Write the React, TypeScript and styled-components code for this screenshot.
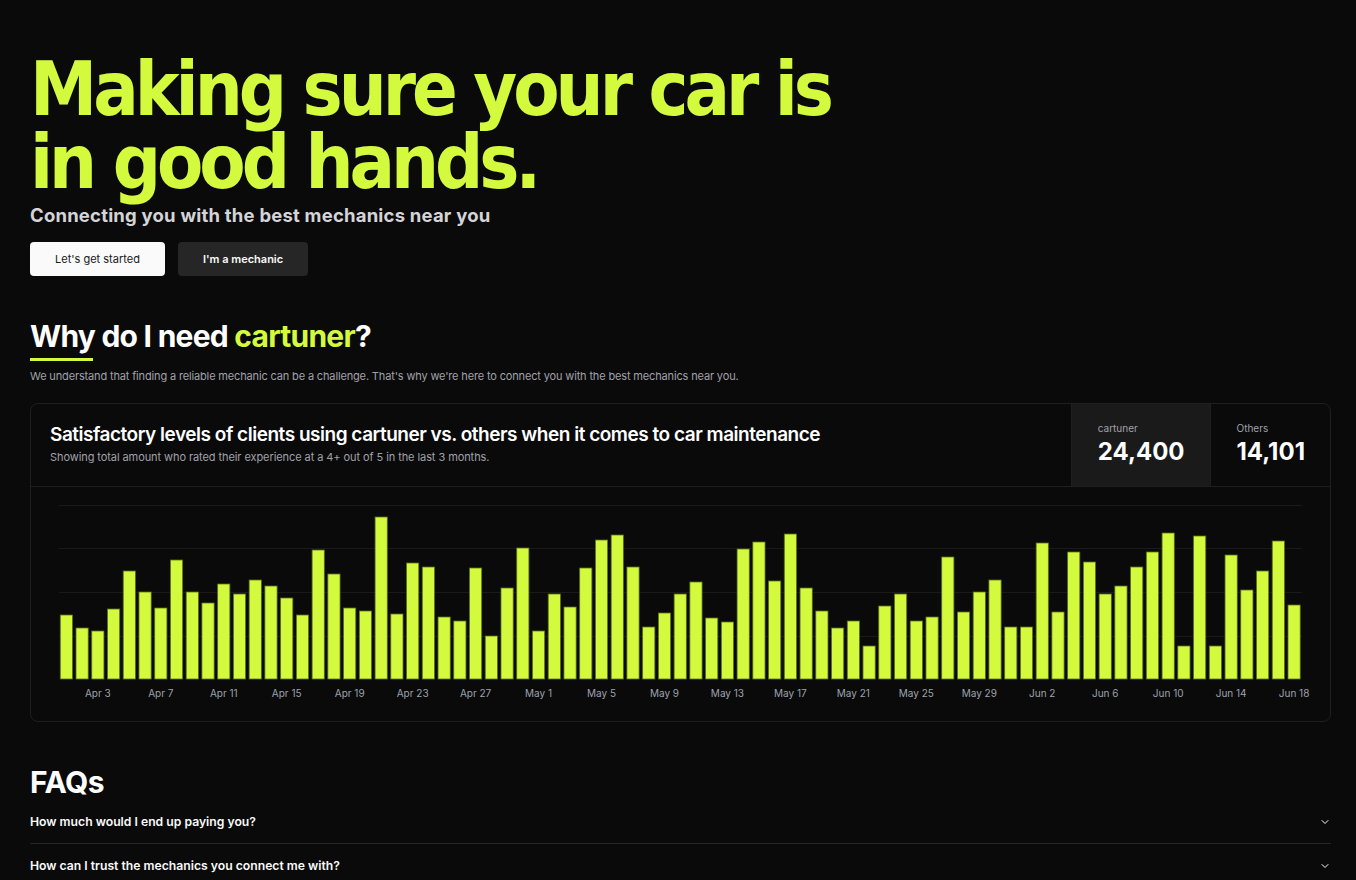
import React from 'react';
import styled, { createGlobalStyle } from 'styled-components';
import { ChevronDown } from 'lucide-react';

const GREEN = '#d4fa3e';

const GlobalStyle = createGlobalStyle`
  html, body {
    margin: 0;
    padding: 0;
    background: #0a0a0a;
  }
  body {
    font-family: Inter, "Liberation Sans", sans-serif;
    color: #fafafa;
  }
  * { box-sizing: border-box; }
`;

const Page = styled.main`
  padding: 53px 25px 40px 30px;
  display: flex;
  flex-direction: column;
`;

const Headline = styled.h1`
  margin: 0;
  font-family: "DejaVu Sans Condensed", "Liberation Sans", sans-serif;
  font-weight: 700;
  font-size: 75px;
  line-height: 73px;
  letter-spacing: -4px;
  color: ${GREEN};
`;

const Tagline = styled.p`
  margin: 5px 0 0;
  font-size: 18.5px;
  line-height: 22px;
  font-weight: 700;
  letter-spacing: 0.2px;
  color: #d4d4d8;
`;

const Actions = styled.div`
  display: flex;
  gap: 13px;
  margin-top: 16px;
`;

const Button = styled.button<{ $variant?: 'light' | 'dark' }>`
  height: 34px;
  padding: 0 25px;
  border: none;
  border-radius: 4px;
  font-family: Inter, "Liberation Sans", sans-serif;
  font-size: 11px;
  font-weight: ${(p) => (p.$variant === 'dark' ? 600 : 400)};
  background: ${(p) => (p.$variant === 'dark' ? '#262626' : '#fafafa')};
  color: ${(p) => (p.$variant === 'dark' ? '#fafafa' : '#18181b')};
  cursor: pointer;
`;

const Section = styled.section`
  margin-top: 42px;
  display: flex;
  flex-direction: column;
`;

const SectionTitle = styled.h2`
  margin: 0;
  font-size: 30px;
  line-height: 36px;
  font-weight: 700;
  letter-spacing: -0.75px;
  color: #fff;
`;

const Accent = styled.span`
  color: ${GREEN};
`;

const Underline = styled.div`
  width: 63px;
  height: 3px;
  margin-top: 4px;
  background: ${GREEN};
`;

const Lead = styled.p`
  margin: 7px 0 0;
  font-size: 11px;
  line-height: 16px;
  color: #a1a1aa;
  letter-spacing: -0.15px;
`;

const Card = styled.div`
  margin-top: 19px;
  border: 1px solid #1f1f1f;
  border-radius: 8px;
  overflow: hidden;
`;

const CardHeader = styled.div`
  display: flex;
  height: 83px;
  border-bottom: 1px solid #1f1f1f;
`;

const CardIntro = styled.div`
  flex: 1;
  padding: 18px 19px;
  display: flex;
  flex-direction: column;
`;

const CardTitle = styled.h3`
  margin: 0;
  font-size: 19px;
  line-height: 25px;
  font-weight: 600;
  letter-spacing: -0.48px;
  color: #fff;
`;

const CardSub = styled.p`
  margin: 2px 0 0;
  font-size: 11px;
  line-height: 16px;
  color: #a1a1aa;
  letter-spacing: -0.08px;
`;

const Stat = styled.div<{ $active?: boolean }>`
  display: flex;
  flex-direction: column;
  justify-content: center;
  padding: 0 25px 2px 26px;
  border-left: 1px solid #1f1f1f;
  background: ${(p) => (p.$active ? '#1a1a1a' : 'transparent')};
`;

const StatLabel = styled.span`
  font-size: 10px;
  line-height: 14px;
  color: #a1a1aa;
`;

const StatValue = styled.span`
  margin-top: 2px;
  font-size: 24px;
  line-height: 30px;
  font-weight: 700;
  color: #fff;
`;

const ChartWrap = styled.div`
  display: flex;
`;

const FaqTitle = styled.h2`
  margin: 0;
  font-size: 30px;
  line-height: 36px;
  font-weight: 700;
  letter-spacing: -0.5px;
  color: #fff;
`;

const FaqList = styled.div`
  display: flex;
  flex-direction: column;
`;

const FaqItem = styled.div`
  display: flex;
  align-items: center;
  justify-content: space-between;
  height: 44px;
  border-bottom: 1px solid #262626;
  font-size: 12.2px;
  font-weight: 600;
  color: #fafafa;
`;

// bar tops, measured in page pixels; baseline at 679
const tops = [
  615, 628, 631, 609, 571, 592, 608, 560, 592, 603, 584, 594, 580, 586, 598, 615, 550, 574, 608, 611,
  517, 614, 563, 567, 617, 621, 568, 636, 588, 548,
  631, 594, 607, 568, 540, 535, 567, 627, 613, 594, 582, 618, 622, 549, 542, 581, 534, 588, 611, 628,
  621, 646, 606, 594, 621, 617, 557, 612, 592, 580, 627,
  627, 543, 612, 552, 562, 594, 586, 567, 552, 533, 646, 536, 646, 555, 590, 571, 541, 605,
];

const dayLabel = (i: number) => {
  if (i < 30) return `Apr ${i + 1}`;
  if (i < 61) return `May ${i - 29}`;
  return `Jun ${i - 60}`;
};

const BarChart = () => {
  const width = 1299;
  const height = 234;
  const x0 = 27.5;
  const pitch = 15.74;
  const bw = 12.2;
  const base = 192;
  const grid = [18, 61, 105, 149];

  return (
    <svg width={width} height={height} viewBox={`0 0 ${width} ${height}`}>
      {grid.map((y) => (
        <line key={y} x1={28} x2={1271} y1={y + 0.5} y2={y + 0.5} stroke="#1a1a1a" strokeWidth={1} />
      ))}
      {tops.map((t, i) => {
        const h = 679 - t;
        const x = x0 + i * pitch + (pitch - bw) / 2;
        return (
          <rect
            key={i}
            x={x}
            y={base - h}
            width={bw}
            height={h}
            fill={GREEN}
            stroke="#5d7018"
            strokeWidth={0.8}
          />
        );
      })}
      {tops.map((_, i) =>
        i % 4 === 2 ? (
          <text
            key={`l${i}`}
            x={x0 + i * pitch + pitch / 2}
            y={210}
            textAnchor="middle"
            fontSize={10}
            fill="#9ca3af"
            fontFamily="Inter, 'Liberation Sans', sans-serif"
          >
            {dayLabel(i)}
          </text>
        ) : null
      )}
    </svg>
  );
};

const App = () => {
  return (
    <>
      <GlobalStyle />
      <Page>
        <Headline>
          Making sure your car is
          <br />
          in good hands.
        </Headline>
        <Tagline>Connecting you with the best mechanics near you</Tagline>
        <Actions>
          <Button>Let's get started</Button>
          <Button $variant="dark">I'm a mechanic</Button>
        </Actions>

        <Section>
          <SectionTitle>
            Why do I need <Accent>cartuner</Accent>?
          </SectionTitle>
          <Underline />
          <Lead>
            We understand that finding a reliable mechanic can be a challenge. That's why we're here to connect you
            with the best mechanics near you.
          </Lead>
          <Card>
            <CardHeader>
              <CardIntro>
                <CardTitle>Satisfactory levels of clients using cartuner vs. others when it comes to car maintenance</CardTitle>
                <CardSub>Showing total amount who rated their experience at a 4+ out of 5 in the last 3 months.</CardSub>
              </CardIntro>
              <Stat $active>
                <StatLabel>cartuner</StatLabel>
                <StatValue>24,400</StatValue>
              </Stat>
              <Stat>
                <StatLabel>Others</StatLabel>
                <StatValue>14,101</StatValue>
              </Stat>
            </CardHeader>
            <ChartWrap>
              <BarChart />
            </ChartWrap>
          </Card>
        </Section>

        <Section>
          <FaqTitle>FAQs</FaqTitle>
          <FaqList>
            <FaqItem>
              How much would I end up paying you?
              <ChevronDown size={12} strokeWidth={2} />
            </FaqItem>
            <FaqItem>
              How can I trust the mechanics you connect me with?
              <ChevronDown size={12} strokeWidth={2} />
            </FaqItem>
            <FaqItem>
              What if I'm not satisfied with the service?
              <ChevronDown size={12} strokeWidth={2} />
            </FaqItem>
          </FaqList>
        </Section>
      </Page>
    </>
  );
};

export default App;
